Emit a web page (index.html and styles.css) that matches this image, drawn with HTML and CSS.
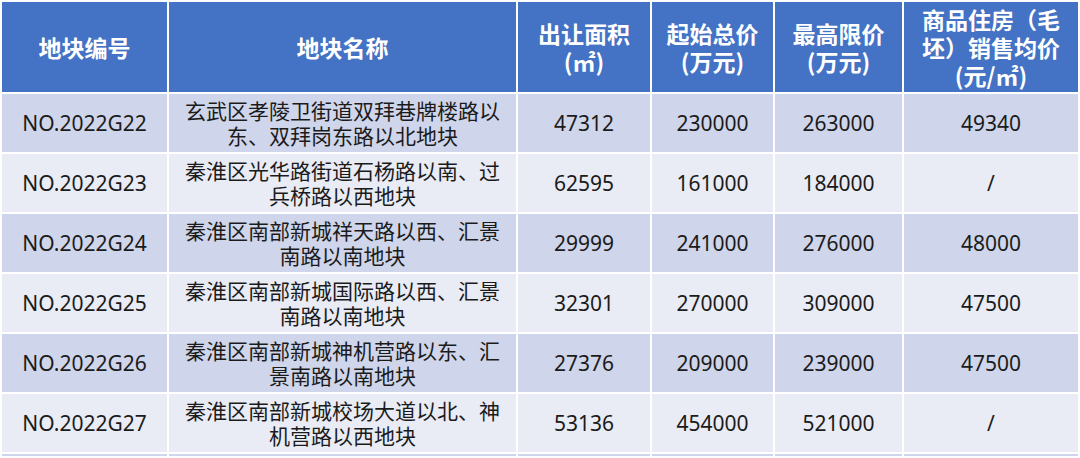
FILE: index.html
```html
<!DOCTYPE html>
<html lang="zh-CN">
<head>
<meta charset="utf-8">
<title>地块出让信息</title>
<link rel="stylesheet" href="styles.css">
</head>
<body>
<table class="land">
  <colgroup>
    <col class="c-id">
    <col class="c-name">
    <col class="c-area">
    <col class="c-start">
    <col class="c-max">
    <col class="c-avg">
  </colgroup>
  <thead>
    <tr>
      <th>地块编号</th>
      <th>地块名称</th>
      <th>出让面积<br>(㎡)</th>
      <th>起始总价<br>(万元)</th>
      <th>最高限价<br>(万元)</th>
      <th>商品住房（毛<br>坯）销售均价<br>(元/㎡)</th>
    </tr>
  </thead>
  <tbody>
    <tr class="dark">
      <td>NO.2022G22</td>
      <td class="name">玄武区孝陵卫街道双拜巷牌楼路以<br>东、双拜岗东路以北地块</td>
      <td>47312</td>
      <td>230000</td>
      <td>263000</td>
      <td>49340</td>
    </tr>
    <tr class="light">
      <td>NO.2022G23</td>
      <td class="name">秦淮区光华路街道石杨路以南、过<br>兵桥路以西地块</td>
      <td>62595</td>
      <td>161000</td>
      <td>184000</td>
      <td>/</td>
    </tr>
    <tr class="dark">
      <td>NO.2022G24</td>
      <td class="name">秦淮区南部新城祥天路以西、汇景<br>南路以南地块</td>
      <td>29999</td>
      <td>241000</td>
      <td>276000</td>
      <td>48000</td>
    </tr>
    <tr class="light">
      <td>NO.2022G25</td>
      <td class="name">秦淮区南部新城国际路以西、汇景<br>南路以南地块</td>
      <td>32301</td>
      <td>270000</td>
      <td>309000</td>
      <td>47500</td>
    </tr>
    <tr class="dark">
      <td>NO.2022G26</td>
      <td class="name">秦淮区南部新城神机营路以东、汇<br>景南路以南地块</td>
      <td>27376</td>
      <td>209000</td>
      <td>239000</td>
      <td>47500</td>
    </tr>
    <tr class="light">
      <td>NO.2022G27</td>
      <td class="name">秦淮区南部新城校场大道以北、神<br>机营路以西地块</td>
      <td>53136</td>
      <td>454000</td>
      <td>521000</td>
      <td>/</td>
    </tr>
    <tr class="dark stub">
      <td></td><td></td><td></td><td></td><td></td><td></td>
    </tr>
  </tbody>
</table>
</body>
</html>
```

FILE: styles.css
```css
html, body {
  margin: 0;
  padding: 0;
  background: #ffffff;
  overflow: hidden;
}

body {
  width: 1080px;
  height: 458px;
}

.land {
  table-layout: fixed;
  border-collapse: separate;
  border-spacing: 2px;
  width: 1080px;
  background: #ffffff;
  font-family: "Noto Sans", "Noto Sans CJK SC", sans-serif;
  color: #1b1b1b;
}

.c-id { width: 165px; }
.c-name { width: 347px; }
.c-area { width: 132px; }
.c-start { width: 121px; }
.c-max { width: 127px; }
.c-avg { width: 174px; }

.land th,
.land td {
  padding: 0;
  text-align: center;
  vertical-align: middle;
  overflow: hidden;
  white-space: nowrap;
}

.land th {
  height: 90px;
  background: #4472c4;
  color: #ffffff;
  font-family: "Noto Sans CJK SC", sans-serif;
  font-weight: 700;
  font-size: 23px;
  line-height: 28px;
}

.land td {
  height: 58px;
  font-size: 21px;
  line-height: 25px;
}

.land .stub td {
  height: 2px;
  line-height: 0;
  font-size: 0;
}

.land .name {
  font-family: "Noto Sans CJK SC", sans-serif;
  font-size: 21px;
}

.dark td {
  background: #cfd5ea;
}

.light td {
  background: #e9ebf5;
}
```
